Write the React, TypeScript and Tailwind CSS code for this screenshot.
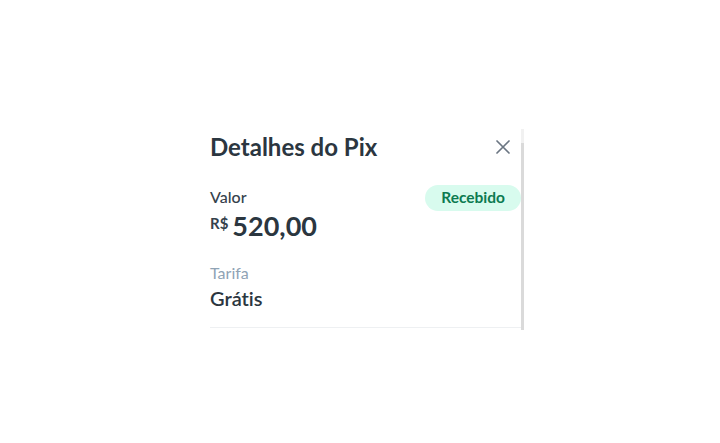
import React from "react";

export default function App() {
  return (
    <div className="min-h-screen bg-white pt-[129px] pl-[210px] [font-variant-ligatures:none]" style={{ fontFamily: "Lato, 'Noto Sans', sans-serif" }}>
      <div className="flex w-[314px] h-[201px]">
        <div className="w-[311px] pt-[4px] flex flex-col">
          <div className="flex items-center justify-between h-[28px]">
            <h1 className="text-[24px] leading-[28px] font-bold text-[#2b3640]">Detalhes do Pix</h1>
            <button className="mr-[10px] text-[#6b7682]">
              <svg width="16" height="16" viewBox="0 0 16 16" fill="none" stroke="currentColor" strokeWidth="1.7" strokeLinecap="round">
                <path d="M2 2 L14 14 M14 2 L2 14" />
              </svg>
            </button>
          </div>
          <div className="flex justify-between items-start mt-[24px]">
            <div className="flex flex-col pt-[2px]">
              <span className="text-[16px] leading-[20px] font-medium text-[#35414c]">Valor</span>
              <div className="flex items-start mt-[3px] h-[32px]">
                <span className="text-[15px] leading-[15px] font-bold text-[#35414c] mr-[4px] mt-[6px]">R$</span>
                <span className="text-[27px] leading-[32px] font-bold text-[#2b3640]">520,00</span>
              </div>
            </div>
            <span className="h-[26px] px-[16px] rounded-full bg-[#d8fbee] text-[#0c7a50] text-[15.5px] font-bold flex items-center">Recebido</span>
          </div>
          <span className="mt-[21px] text-[16px] leading-[20px] text-[#8fa3b5]">Tarifa</span>
          <span className="mt-[3px] text-[20px] leading-[24px] font-semibold text-[#2b3640]">Grátis</span>
          <div className="mt-[17px] h-px bg-[#eef0f2]" />
        </div>
        <div className="w-[3px] bg-[#f1f1f1] flex flex-col">
          <div className="mt-[14px] flex-1 bg-[#dadada]" />
        </div>
      </div>
    </div>
  );
}
